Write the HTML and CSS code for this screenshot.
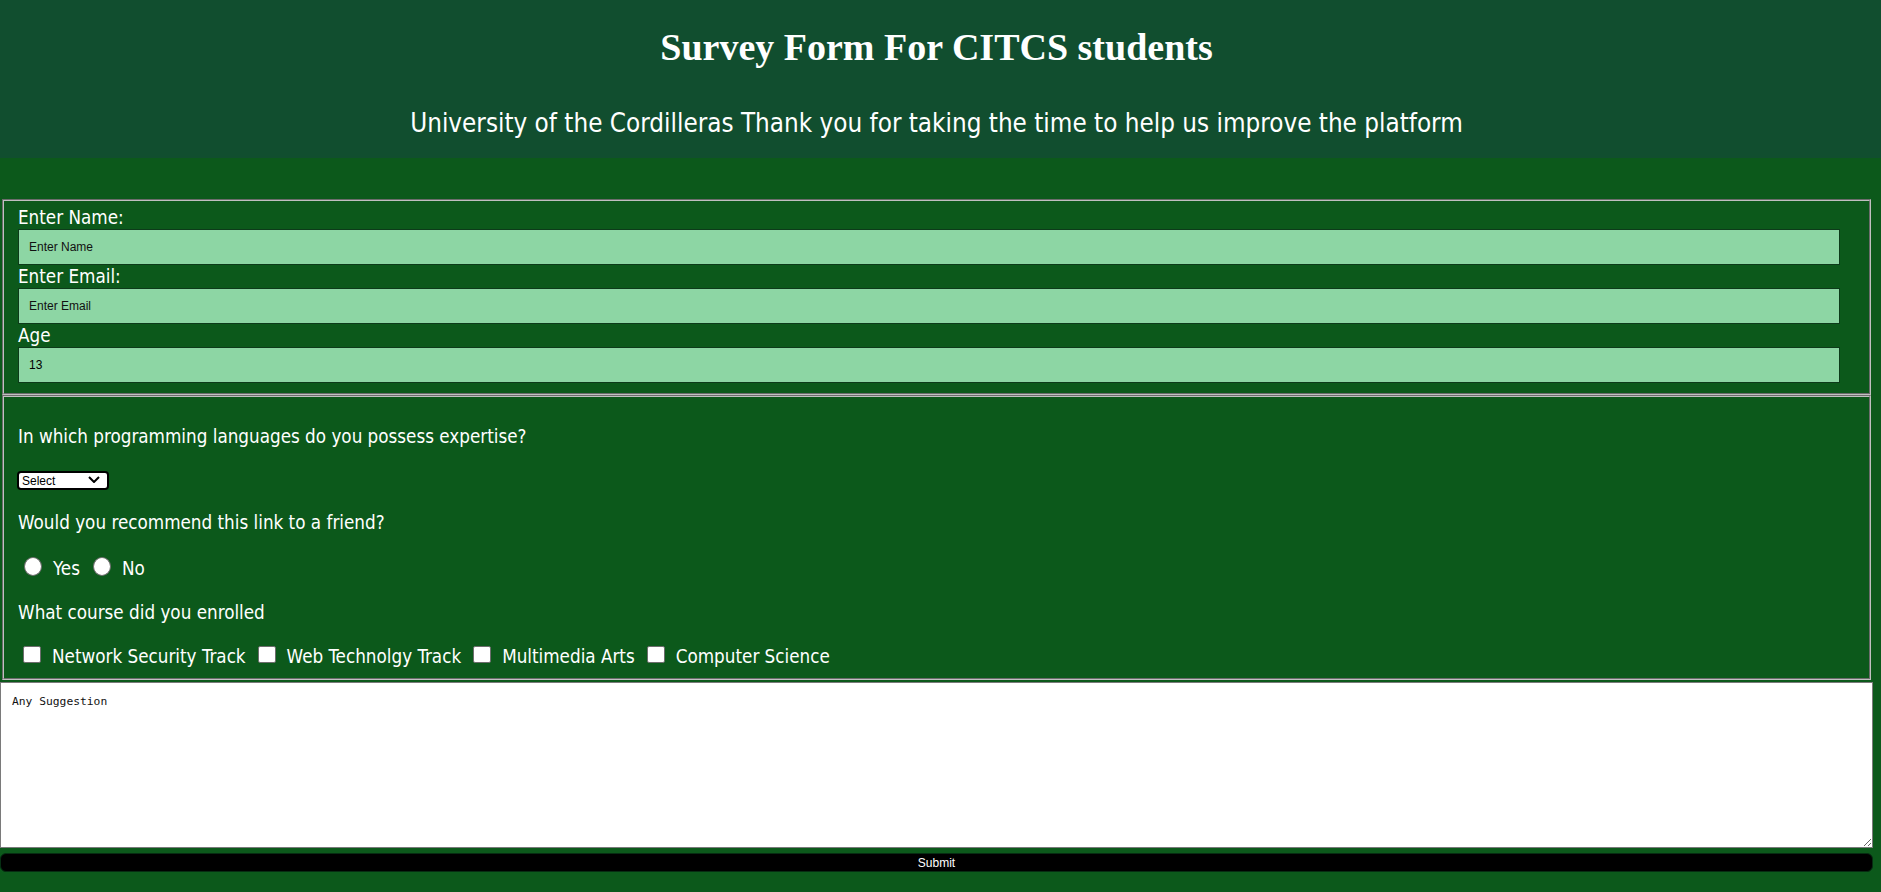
FILE: index.html
```html
<!DOCTYPE html>
<html lang="en">
<head>
<meta charset="utf-8">
<title>Survey Form For CITCS students</title>
<link rel="stylesheet" href="styles.css">
</head>
<body>
<header class="hero">
  <h1 class="hero-title">Survey Form For CITCS students</h1>
  <p class="hero-sub">University of the Cordilleras Thank you for taking the time to help us improve the platform</p>
</header>

<form class="survey">
  <fieldset class="personal">
    <label class="field-label" for="name">Enter Name:</label>
    <input class="field-input" id="name" type="text" placeholder="Enter Name">
    <label class="field-label" for="email">Enter Email:</label>
    <input class="field-input" id="email" type="email" placeholder="Enter Email">
    <label class="field-label" for="age">Age</label>
    <input class="field-input" id="age" type="number" value="13">
  </fieldset>

  <fieldset class="questions">
    <div class="q-row"><p class="q-text">In which programming languages do you possess expertise?</p></div>
    <div class="q-row q-row-select">
      <div class="select-wrap">
        <select class="lang-select">
          <option>Select</option>
          <option>HTML</option>
          <option>CSS</option>
          <option>JavaScript</option>
          <option>Python</option>
          <option>Java</option>
        </select>
        <svg class="chevron" width="12" height="7" viewBox="0 0 12 7"><path d="M1 1l5 5 5-5" fill="none" stroke="#000" stroke-width="2"/></svg>
      </div>
    </div>
    <div class="q-row q-row-tall"><p class="q-text">Would you recommend this link to a friend?</p></div>
    <div class="q-row">
      <input class="radio" type="radio" name="rec" id="yes"><label class="opt-label" for="yes">Yes</label>
      <input class="radio" type="radio" name="rec" id="no"><label class="opt-label" for="no">No</label>
    </div>
    <div class="q-row"><p class="q-text">What course did you enrolled</p></div>
    <div class="q-row">
      <input class="check" type="checkbox" id="c1"><label class="opt-label" for="c1">Network Security Track</label>
      <input class="check" type="checkbox" id="c2"><label class="opt-label" for="c2">Web Technolgy Track</label>
      <input class="check" type="checkbox" id="c3"><label class="opt-label" for="c3">Multimedia Arts</label>
      <input class="check" type="checkbox" id="c4"><label class="opt-label" for="c4">Computer Science</label>
    </div>
  </fieldset>

  <textarea class="suggest" placeholder="Any Suggestion"></textarea>
  <button class="submit" type="button">Submit</button>
</form>
</body>
</html>
```

FILE: styles.css
```css
body {
  margin: 0;
  background: #0c591b;
  color: #fff;
  font-family: "DejaVu Sans Condensed", "DejaVu Sans", sans-serif;
  font-stretch: condensed;
}

.hero {
  background: #114e2f;
  padding: 24px 8px 20px 0;
  text-align: center;
}

.hero-title {
  margin: 0;
  font: bold 38px/46px "Liberation Serif", serif;
}

.hero-sub {
  margin: 38px 0 0;
  font-size: 25.8px;
  line-height: 30px;
}

.survey {
  width: 1873px;
  margin-top: 41px;
}

.personal,
.questions {
  margin: 0 2px;
  border: 2px groove #c0c0c0;
  min-width: 0;
}

.personal {
  padding: 5px 29px 10px 14px;
}

.field-label {
  display: block;
  height: 23px;
  font-size: 18.7px;
  line-height: 23px;
}

.field-input {
  display: block;
  box-sizing: border-box;
  width: 100%;
  height: 36px;
  margin: 0;
  padding: 0 10px;
  border: 1px solid #0d3b1a;
  background: #8dd6a4;
  color: #000;
  font: 12px "Liberation Sans", Arial, sans-serif;
  outline: none;
}

.field-input::placeholder {
  color: #111;
}

.field-input::-webkit-inner-spin-button,
.field-input::-webkit-outer-spin-button {
  -webkit-appearance: none;
  margin: 0;
}

.questions {
  padding: 17px 14px 0;
}

.q-row {
  height: 44px;
  display: flex;
  align-items: center;
}

.q-row-select {
  height: 41px;
}

.q-row-tall {
  height: 47px;
}

.q-text {
  margin: 0;
  font-size: 18.7px;
  line-height: 23px;
}

.select-wrap {
  position: relative;
  width: 92px;
  height: 19px;
  margin: 1px 0 0 -1px;
}

.lang-select {
  -webkit-appearance: none;
  appearance: none;
  box-sizing: border-box;
  width: 100%;
  height: 100%;
  margin: 0;
  padding: 0 0 0 3px;
  border: 2px solid #000;
  border-radius: 4px;
  background: #fff;
  color: #000;
  font: 12px "Liberation Sans", Arial, sans-serif;
}

.chevron {
  position: absolute;
  right: 9px;
  top: 6px;
  pointer-events: none;
}

.radio,
.check {
  -webkit-appearance: none;
  appearance: none;
  box-sizing: border-box;
  margin: 0 11px 0 6px;
  background: #fff;
  border: 1px solid #6d6d6d;
  flex: none;
  position: relative;
  top: -2px;
}

.radio {
  width: 18px;
  height: 19px;
  border-radius: 50%;
}

.check {
  width: 18px;
  height: 17px;
  border-radius: 2px;
  margin-left: 5px;
}

.opt-label {
  font-size: 18.7px;
  line-height: 23px;
  margin-right: 7px;
}

.suggest {
  display: block;
  box-sizing: border-box;
  width: 100%;
  height: 166px;
  margin: 2px 0 0;
  padding: 12px 11px;
  border: 1px solid #7a7a7a;
  background: #fff;
  color: #000;
  font: 11.3px "DejaVu Sans Mono", monospace;
  font-stretch: normal;
  resize: vertical;
}

.suggest::placeholder {
  color: #111;
}

.submit {
  display: block;
  width: 100%;
  height: 19px;
  margin-top: 5px;
  padding: 0;
  border: 1px solid #062d12;
  border-radius: 6px;
  background: #000;
  color: #fff;
  font: 12px "Liberation Sans", Arial, sans-serif;
}
```
